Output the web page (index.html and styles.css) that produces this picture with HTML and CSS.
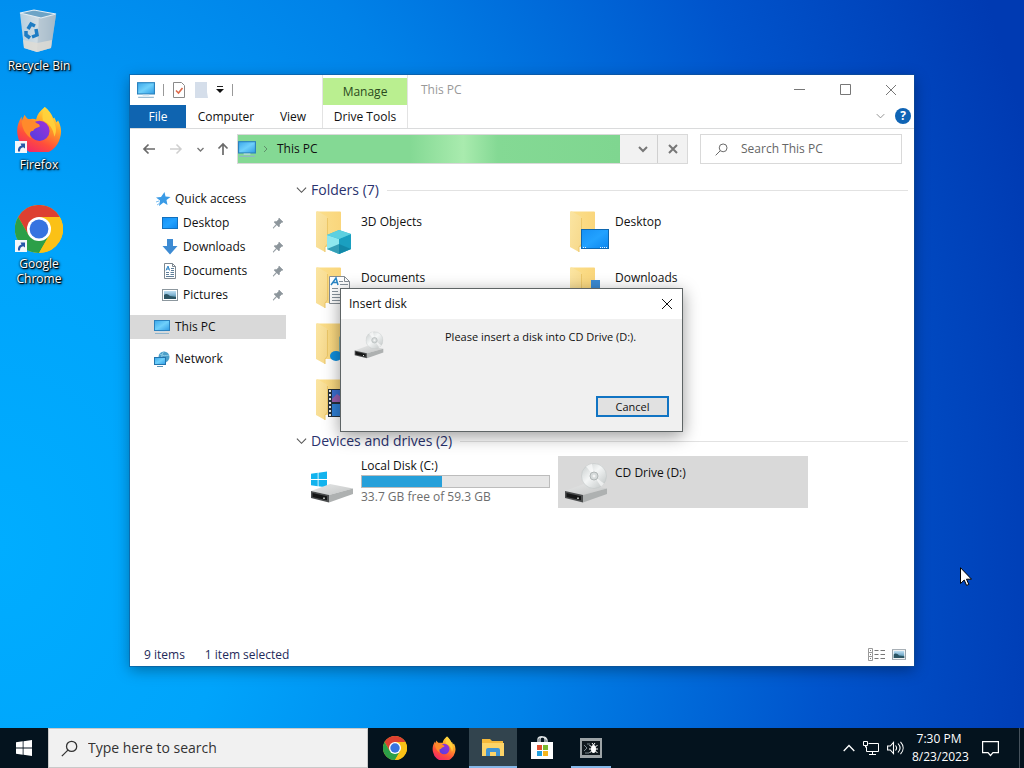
FILE: index.html
```html
<!DOCTYPE html>
<html lang="en">
<head>
    <meta charset="UTF-8">
    <title>This PC</title>
    <link rel="stylesheet" href="styles.css">
</head>
<body>
    <!-- shared icons -->
    <svg class="defs" width="0" height="0" aria-hidden="true">
        <defs>
            <linearGradient id="gScreen" x1="0" y1="0" x2="1" y2="1"><stop offset="0" stop-color="#3ba7ea"/><stop offset="0.5" stop-color="#6fd0fb"/><stop offset="1" stop-color="#2f9be4"/></linearGradient>
            <linearGradient id="gDesk" x1="0" y1="0" x2="1" y2="1"><stop offset="0" stop-color="#1590f5"/><stop offset="0.5" stop-color="#22a2ff"/><stop offset="1" stop-color="#0c86ee"/></linearGradient>
            <linearGradient id="gFolder" x1="0" y1="0" x2="1" y2="0"><stop offset="0" stop-color="#fbdf8c"/><stop offset="1" stop-color="#fad67c"/></linearGradient>
            <linearGradient id="gFront" x1="0" y1="0" x2="1" y2="1"><stop offset="0" stop-color="#fbe5a2"/><stop offset="1" stop-color="#f6d88a"/></linearGradient>
            <linearGradient id="gFox" x1="0.8" y1="0" x2="0.3" y2="1"><stop offset="0" stop-color="#fff04a"/><stop offset="0.35" stop-color="#ffa326"/><stop offset="0.7" stop-color="#ff4f3a"/><stop offset="1" stop-color="#f0246e"/></linearGradient>
            <linearGradient id="gGlobe" x1="0" y1="1" x2="1" y2="0"><stop offset="0" stop-color="#4f3fe0"/><stop offset="1" stop-color="#a030d8"/></linearGradient>
            <linearGradient id="gDisc" x1="0" y1="0" x2="1" y2="1"><stop offset="0" stop-color="#c5caca"/><stop offset="0.45" stop-color="#f4f6f6"/><stop offset="1" stop-color="#bcc1c1"/></linearGradient>
            <linearGradient id="gDrive" x1="0" y1="0" x2="1" y2="1"><stop offset="0" stop-color="#e6e7e7"/><stop offset="1" stop-color="#c4c6c6"/></linearGradient>
            <linearGradient id="gBin" x1="0" y1="0" x2="1" y2="0"><stop offset="0" stop-color="#b4cfe0"/><stop offset="0.5" stop-color="#d3dde3"/><stop offset="1" stop-color="#9fb6c4"/></linearGradient>
            <linearGradient id="gPic" x1="0" y1="0" x2="0" y2="1"><stop offset="0" stop-color="#bfe0f3"/><stop offset="0.5" stop-color="#7fb2d0"/><stop offset="1" stop-color="#2d6b78"/></linearGradient>

            <symbol id="pc" viewBox="0 0 16 16">
                <rect x="0.5" y="1.5" width="15" height="10" fill="url(#gScreen)" stroke="#2b82be"/>
                <path d="M1 14.5h14" stroke="#8fb4cc"/>
                <path d="M5 12.5h6" stroke="#c5dbe8"/>
            </symbol>
            <symbol id="folder" viewBox="0 0 48 48">
                <path d="M9 4.500h23a1 1 0 0 1 1 1V40H14V9z" fill="url(#gFolder)"/>
                <path d="M8 5c0-1 1-1 2-.5l8 4.500c1 .5 1.500 1 1.500 2V37l-2.500 3v5L8 40z" fill="url(#gFront)"/>
                <path d="M17 45v-5l2.500-3V11" fill="none" stroke="#ecc768"/>
            </symbol>
            <symbol id="doc" viewBox="0 0 16 16">
                <path d="M2.500.5h8l3 3v12h-11z" fill="#fff" stroke="#7d8790"/>
                <path d="M10.500.5v3h3" fill="none" stroke="#7d8790"/>
                <path d="M4 7.500l2-4.500 1.500 4.500M4.500 6h3" fill="none" stroke="#2f86c8"/>
                <path d="M9 5.500h3M9 7.500h3M4 9.500h3M8.500 9.500h3.500M4 11.500h3M8.500 11.500h3.500M4 13.500h8" stroke="#5f7f9a"/>
            </symbol>
            <symbol id="picture" viewBox="0 0 16 12">
                <rect x="0.5" y="0.5" width="15" height="11" fill="#fff" stroke="#8c979e"/>
                <rect x="2" y="2" width="12" height="8" fill="url(#gPic)"/>
                <path d="M2 6c2-2 4-1 6 1l6 1v2H2z" fill="#2c5564"/>
            </symbol>
            <symbol id="pin" viewBox="0 0 12 12">
                <path d="M7 1l4 4-1.500.5L7.500 7.500c.2 1 0 2-.5 2.500L4.800 7.800 1.300 11.200 1 11l3.200-3.700L2 5c.8-.7 1.700-.7 2.600-.4l2-2z" fill="#8d969c" stroke="#8d969c" stroke-width=".6"/>
            </symbol>
            <symbol id="chevron" viewBox="0 0 12 8">
                <path d="M1 1.500l5 5 5-5" fill="none" stroke="currentColor" stroke-width="1.200"/>
            </symbol>
            <symbol id="lens" viewBox="0 0 16 16">
                <circle cx="10" cy="6" r="4.800" fill="none" stroke="currentColor" stroke-width="1.200"/>
                <path d="M6.500 9.500L.8 15.200" stroke="currentColor" stroke-width="1.200"/>
            </symbol>
            <symbol id="close" viewBox="0 0 12 12">
                <path d="M1 1l10 10M11 1L1 11" stroke="currentColor"/>
            </symbol>
            <symbol id="winlogo" viewBox="0 0 16 16">
                <path d="M0 2.300l6.700-1v6.300H0zM7.500 1.200L16 0v7.600H7.500zM0 8.400h6.700v6.300L0 13.700zM7.500 8.400H16V16l-8.500-1.200z" fill="currentColor"/>
            </symbol>
            <symbol id="drive" viewBox="0 0 44 20">
                <path d="M1 8L20 1l23 4.500L19 12z" fill="url(#gDrive)"/>
                <path d="M1 8l18 4v7.500L1 15z" fill="#4b4d4e"/>
                <path d="M2.500 10l14.500 3.300v4L2.500 14z" fill="#151616"/>
                <path d="M19 12L43 5.500V11L19 19.500z" fill="#aeb1b1"/>
                <path d="M14 14.500v1.500" stroke="#dfe5df" stroke-width="1.500"/>
            </symbol>
            <symbol id="disc" viewBox="0 0 26 26">
                <circle cx="13" cy="13" r="12.500" fill="url(#gDisc)" stroke="#c3c8c8" stroke-width=".6"/>
                <path d="M13 13L5 3.500A12.500 12.500 0 0 1 11 .7zM13 13l10 7.500a12.500 12.500 0 0 1-3 3z" fill="#fff" opacity="0.6"/>
                <circle cx="13" cy="13" r="4" fill="#d5dada" stroke="#b1b6b6"/>
                <circle cx="13" cy="13" r="1.500" fill="#f4f4f4"/>
            </symbol>
            <symbol id="cd" viewBox="0 0 44 40">
                <use href="#drive" x="0" y="20" width="44" height="20"/>
                <use href="#disc" x="17" y="0" width="26" height="26"/>
            </symbol>
            <symbol id="chrome" viewBox="0 0 48 48">
                <circle cx="24" cy="24" r="24" fill="#fbc116"/>
                <path d="M3.200 12A24 24 0 0 1 44.800 12H24L13.600 30z" fill="#dd4031"/>
                <path d="M3.200 12A24 24 0 0 0 24 48L34.400 30 24 24 13.600 30z" fill="#2c9f48"/>
                <path d="M24 12h20.800A24 24 0 0 1 24 48l10.400-18z" fill="#fbc116"/>
                <circle cx="24" cy="24" r="12" fill="#fff"/>
                <circle cx="24" cy="24" r="9.400" fill="#3673e0"/>
            </symbol>
            <symbol id="firefox" viewBox="0 0 48 48">
                <path d="M30 1c4 3 7 7 9 12l1-1c1 2 2 4 2 5l2-2c3 6 4 12 2 18A22.500 22.500 0 0 1 2 32C0 24 2 17 6 11v4l3-6c1 2 2 3 4 5 3-1 6-1 8 0 1-5 4-9 9-13z" fill="url(#gFox)"/>
                <circle cx="24.500" cy="26" r="10.500" fill="url(#gGlobe)"/>
                <path d="M6 16c3-3 8-3 12-1 2 1 3 3 6 4l1 2c-3 2-6 2-7 5-1 0-2 0-3 1-1 3 0 5 1 7-5-3-10-10-10-18z" fill="#ff8a2b"/>
                <path d="M28 15c-1-5 0-10 2-14 4 4 6 8 8 12 4 7 5 13 2 19-1-8-5-14-12-17z" fill="#ffd33c" opacity="0.9"/>
            </symbol>
            <symbol id="shortcut" viewBox="0 0 12 12">
                <rect width="12" height="12" fill="#f5f7fa"/>
                <path d="M3 10.500C2.500 7 4 5 6.500 4.500L5.500 2.500H10V7.500L8.300 6.300C6 6.500 5 8 5 10.500z" fill="#2757a8"/>
            </symbol>
        </defs>
    </svg>

    <main class="desktop">
        <nav class="shortcuts" aria-label="Desktop">
            <a href="#" class="shortcut">
                <svg width="48" height="48" viewBox="0 0 48 48">
                    <path d="M5 6l36 2-5 33-14 4-13-4z" fill="url(#gBin)"/>
                    <path d="M24 9l17-1-5 33-14 4z" fill="#a9bccb" opacity="0.6"/>
                    <path d="M5 6l14-3 22 4-15 4z" fill="#6ea4c6" stroke="#e6eef3" stroke-width="1.200"/>
                    <path d="M8 33l14 3 15-3-1 8-14 4-13-4z" fill="#e0dcd5" opacity="0.8"/>
                    <g fill="none" stroke="#1d7cc4" stroke-width="3.500">
                        <path d="M13 22l3-5 4 2"/><path d="M21 22l1 6-5 2"/><path d="M15 31l-4-3 0-4"/>
                    </g>
                </svg>
                <span>Recycle Bin</span>
            </a>
            <a href="#" class="shortcut">
                <svg width="48" height="48" viewBox="0 0 48 48">
                    <use href="#firefox" x="1" y="0" width="46" height="46"/>
                    <use href="#shortcut" x="0" y="35" width="12" height="12"/>
                </svg>
                <span>Firefox</span>
            </a>
            <a href="#" class="shortcut">
                <svg width="48" height="48" viewBox="0 0 48 48">
                    <use href="#chrome" width="48" height="48"/>
                    <use href="#shortcut" x="0" y="35" width="12" height="12"/>
                </svg>
                <span>Google Chrome</span>
            </a>
        </nav>

        <section class="window">
            <header class="ribbon">
                <div class="ribbon-left">
                    <div class="quick-bar">
                        <svg width="18" height="18"><use href="#pc"/></svg>
                        <i class="sep"></i>
                        <button aria-label="Properties">
                            <svg width="14" height="16" viewBox="0 0 14 16"><path d="M1.500.5h8l3 3v12h-11z" fill="#fff" stroke="#8a8a8a"/><path d="M4 8.500l2.500 2.500 4-5" fill="none" stroke="#dd6a4a" stroke-width="1.600"/></svg>
                        </button>
                        <button aria-label="New folder">
                            <svg width="14" height="16" viewBox="0 0 14 16"><path d="M1 0h12v10l1 6H1z" fill="#d5deea"/></svg>
                        </button>
                        <button aria-label="Customize">
                            <svg width="8" height="8" viewBox="0 0 8 8"><path d="M1 .5h6" stroke="#222"/><path d="M0 3h8L4 7z" fill="#111"/></svg>
                        </button>
                        <i class="sep"></i>
                    </div>
                    <div class="tabs">
                        <button class="tab file">File</button>
                        <button class="tab computer">Computer</button>
                        <button class="tab view">View</button>
                    </div>
                </div>
                <div class="context">
                    <div class="context-title">Manage</div>
                    <button class="tab">Drive Tools</button>
                </div>
                <div class="ribbon-right">
                    <div class="title-row">
                        <h1>This PC</h1>
                        <button aria-label="Minimize"><svg width="11" height="11" viewBox="0 0 11 11"><path d="M0 5.500h11" stroke="currentColor"/></svg></button>
                        <button aria-label="Maximize"><svg width="11" height="11" viewBox="0 0 11 11"><path d="M.5.5h10v10H.5z" fill="none" stroke="currentColor"/></svg></button>
                        <button aria-label="Close"><svg width="12" height="12"><use href="#close"/></svg></button>
                    </div>
                    <div class="help-row">
                        <button aria-label="Expand ribbon"><svg width="9" height="6"><use href="#chevron"/></svg></button>
                        <button class="help" aria-label="Help">?</button>
                    </div>
                </div>
            </header>

            <div class="address-row">
                <div class="nav-buttons">
                    <button aria-label="Back"><svg width="14" height="12" viewBox="0 0 14 12"><path d="M13 6H2M6.500 1.500L2 6l4.500 4.500" fill="none" stroke="#6a6a6a" stroke-width="1.700"/></svg></button>
                    <button aria-label="Forward"><svg width="14" height="12" viewBox="0 0 14 12"><path d="M1 6h11M7.500 1.500L12 6l-4.500 4.500" fill="none" stroke="#cfcfcf" stroke-width="1.500"/></svg></button>
                    <button aria-label="Recent"><svg width="7" height="5" viewBox="0 0 7 5"><path d="M.5 1l3 3 3-3" fill="none" stroke="#777" stroke-width="1.400"/></svg></button>
                    <button aria-label="Up"><svg width="12" height="14" viewBox="0 0 12 14"><path d="M6 13V2M1.500 6.500L6 2l4.500 4.500" fill="none" stroke="#6a6a6a" stroke-width="1.700"/></svg></button>
                </div>
                <div class="address">
                    <div class="crumbs">
                        <svg width="18" height="18"><use href="#pc"/></svg>
                        <svg width="5" height="8" viewBox="0 0 5 8"><path d="M1 1l3 3-3 3" fill="none" stroke="#5f8f6a"/></svg>
                        <a href="#">This PC</a>
                    </div>
                    <button class="previous" aria-label="Previous locations"><svg width="10" height="7" viewBox="0 0 10 7"><path d="M1 1l4 4 4-4" fill="none" stroke="#777" stroke-width="2"/></svg></button>
                    <button class="stop" aria-label="Stop"><svg width="10" height="10" viewBox="0 0 10 10"><path d="M1 1l8 8M9 1L1 9" stroke="#777" stroke-width="2"/></svg></button>
                </div>
                <label class="search">
                    <svg width="13" height="13"><use href="#lens"/></svg>
                    <input type="text" placeholder="Search This PC" aria-label="Search This PC">
                </label>
            </div>

            <div class="content">
                <nav class="tree" aria-label="Navigation">
                    <div class="group">
                        <a href="#" class="root quick">
                            <svg width="16" height="16" viewBox="0 0 16 16"><path d="M9.500 1l1 4.500L15.500 6 11.500 9l1 5-4-2.500L4 15l1-5.500L1 6.500 6 6z" fill="#3a9be6"/><path d="M1 11l3-1M2 14l3-2" stroke="#7abff2"/></svg>
                            <span>Quick access</span>
                        </a>
                        <a href="#">
                            <svg width="16" height="16" viewBox="0 0 16 16"><rect x="0.500" y="2.500" width="15" height="11" fill="url(#gDesk)" stroke="#1270bd"/></svg>
                            <span>Desktop</span>
                            <svg class="pin" width="12" height="12"><use href="#pin"/></svg>
                        </a>
                        <a href="#">
                            <svg width="16" height="16" viewBox="0 0 16 16"><path d="M5 0h6v7h4.500L8 15.500.5 7H5z" fill="#3d8bd3"/></svg>
                            <span>Downloads</span>
                            <svg class="pin" width="12" height="12"><use href="#pin"/></svg>
                        </a>
                        <a href="#">
                            <svg width="16" height="16"><use href="#doc"/></svg>
                            <span>Documents</span>
                            <svg class="pin" width="12" height="12"><use href="#pin"/></svg>
                        </a>
                        <a href="#">
                            <svg width="16" height="12"><use href="#picture"/></svg>
                            <span>Pictures</span>
                            <svg class="pin" width="12" height="12"><use href="#pin"/></svg>
                        </a>
                    </div>
                    <a href="#" class="root selected">
                        <svg width="16" height="16"><use href="#pc"/></svg>
                        <span>This PC</span>
                    </a>
                    <a href="#" class="root">
                        <svg width="16" height="16" viewBox="0 0 16 16"><circle cx="10" cy="6" r="5.500" fill="#4b9fc9"/><path d="M6 3c3 2 6 2 9 1M10 .5c-3 3-3 8 0 11" fill="none" stroke="#8fcce6"/><rect x="0.500" y="6.500" width="11" height="7" fill="url(#gScreen)" stroke="#2374ad"/><path d="M3 15.500h6" stroke="#5a93b5"/></svg>
                        <span>Network</span>
                    </a>
                </nav>

                <div class="files">
                    <h2><svg width="11" height="8"><use href="#chevron"/></svg>Folders (7)</h2>
                    <div class="items">
                        <a href="#" class="item">
                            <svg width="48" height="48" viewBox="0 0 48 48"><use href="#folder"/><path d="M19 28l12-5 12 4v15l-12 5-12-5z" fill="#35bfd6"/><path d="M19 28l12 4v15l-12-5z" fill="#8fe7ee"/><path d="M31 32l12-5v15l-12 5z" fill="#1a9fc0"/><path d="M19 28l12-5 12 4-12 5z" fill="#5dd0e0"/><path d="M19 42l12-5 12 5-12 5z" fill="#0f7f9e" opacity="0.7"/></svg>
                            <span>3D Objects</span>
                        </a>
                        <a href="#" class="item">
                            <svg width="48" height="48" viewBox="0 0 48 48"><use href="#folder"/><rect x="19.500" y="22.500" width="27" height="19" fill="url(#gDesk)" stroke="#0e67b0"/><path d="M21 40.500h4M38 40.500h7" stroke="#e8f4ff" stroke-dasharray="1 1"/></svg>
                            <span>Desktop</span>
                        </a>
                        <a href="#" class="item">
                            <svg width="48" height="48" viewBox="0 0 48 48"><use href="#folder"/><path d="M21.500 13.500h15l5 5v22h-20z" fill="#fff" stroke="#858d94"/><path d="M36.500 13.500v5h5" fill="none" stroke="#858d94"/><path d="M23 22l5-7 2 7M25 19.500h4" fill="none" stroke="#2b86c5" stroke-width="1.500"/><path d="M31 18.500h4M32 21.500h8M24 25.500h6M32 25.500h8M24 28.500h6M32 28.500h8M24 31.500h16M24 34.500h16M24 37.500h16" stroke="#87929b"/></svg>
                            <span>Documents</span>
                        </a>
                        <a href="#" class="item">
                            <svg width="48" height="48" viewBox="0 0 48 48"><use href="#folder"/><path d="M29 17h9v12h7L33.500 43 22 29h7z" fill="#3d8bd3"/></svg>
                            <span>Downloads</span>
                        </a>
                        <a href="#" class="item" aria-label="Music">
                            <svg width="48" height="48" viewBox="0 0 48 48"><use href="#folder"/><ellipse cx="28" cy="37" rx="6" ry="5" fill="#0f8fdd"/><path d="M33 37V20l9 5" fill="none" stroke="#0f8fdd" stroke-width="3"/></svg>
                        </a>
                        <a href="#" class="item" aria-label="Pictures">
                            <svg width="48" height="48" viewBox="0 0 48 48"><use href="#folder"/><use href="#picture" x="18" y="22" width="28" height="21"/></svg>
                        </a>
                        <a href="#" class="item" aria-label="Videos">
                            <svg width="48" height="48" viewBox="0 0 48 48"><use href="#folder"/><rect x="20" y="14" width="26" height="28" fill="#26313c"/><path d="M22 15v27" stroke="#e8ecf0" stroke-width="2" stroke-dasharray="2 2"/><rect x="24" y="15" width="18" height="12" fill="#3c6fd0"/><path d="M24 24l5-5 4 3 5 3v2H24z" fill="#9a5fae"/><rect x="24" y="29" width="18" height="12" fill="#2f7fd6"/></svg>
                        </a>
                    </div>

                    <h2><svg width="11" height="8"><use href="#chevron"/></svg>Devices and drives (2)</h2>
                    <div class="items">
                        <a href="#" class="item drive">
                            <svg width="48" height="48" viewBox="0 0 48 48"><g color="#12b3ee"><use href="#winlogo" x="3" y="13" width="16" height="17"/></g><use href="#drive" x="2" y="25" width="44" height="20"/></svg>
                            <div class="drive-info">
                                <span>Local Disk (C:)</span>
                                <div class="meter"><div class="used" style="width: 43%"></div></div>
                                <small>33.7 GB free of 59.3 GB</small>
                            </div>
                        </a>
                        <a href="#" class="item active">
                            <svg width="48" height="48" viewBox="0 0 48 48"><use href="#cd" x="2" y="5" width="44" height="40"/></svg>
                            <span>CD Drive (D:)</span>
                        </a>
                    </div>
                </div>
            </div>

            <footer class="status">
                <span>9 items</span>
                <span>1 item selected</span>
                <div class="views">
                    <button aria-label="Details"><svg width="17" height="13" viewBox="0 0 17 13"><path d="M.5.5h4v4h-4zM.5 4.500h4v4h-4zM.5 8.500h4v4h-4z" fill="none" stroke="#999"/><path d="M2 2.500h1M2 6.500h1M2 10.500h1M6.500 2.500h4M12.500 2.500H17M6.500 6.500h4M12.500 6.500H17M6.500 10.500h4M12.500 10.500H17" stroke="#777"/></svg></button>
                    <button aria-label="Large icons"><svg width="14" height="11"><use href="#picture"/></svg></button>
                </div>
            </footer>

            <div class="dialog" role="dialog" aria-labelledby="dialogTitle">
                <div class="dialog-title">
                    <span id="dialogTitle">Insert disk</span>
                    <button aria-label="Close"><svg width="12" height="12"><use href="#close"/></svg></button>
                </div>
                <div class="dialog-body">
                    <svg width="30" height="30"><use href="#cd"/></svg>
                    <p>Please insert a disk into CD Drive (D:).</p>
                </div>
                <div class="dialog-actions">
                    <button class="cancel">Cancel</button>
                </div>
            </div>
        </section>

        <svg class="cursor" width="12" height="19" viewBox="0 0 12 19"><path d="M.5.7v15.800l3.700-3.500 2.400 5.400 2.200-1-2.300-5.200h5z" fill="#fff" stroke="#000"/></svg>
    </main>

    <footer class="taskbar">
        <button class="start" aria-label="Start"><svg width="16" height="16"><use href="#winlogo"/></svg></button>
        <label class="task-search">
            <svg width="17" height="17"><use href="#lens"/></svg>
            <input type="text" placeholder="Type here to search" aria-label="Type here to search">
        </label>
        <div class="apps">
            <button aria-label="Chrome"><svg width="24" height="24"><use href="#chrome"/></svg></button>
            <button aria-label="Firefox"><svg width="24" height="24"><use href="#firefox"/></svg></button>
            <button class="open current" aria-label="File Explorer">
                <svg width="24" height="24" viewBox="0 0 24 24"><path d="M1 3h8l2 2h11v15H1z" fill="#f5b93a"/><path d="M1 7h22v13H1z" fill="#fcd468"/><path d="M5 20v-6a2 2 0 0 1 2-2h10a2 2 0 0 1 2 2v6h-4v-4H9v4z" fill="#3f94d4"/></svg>
            </button>
            <button aria-label="Store">
                <svg width="24" height="24" viewBox="0 0 24 24"><path d="M8 6V3c0-3 7-3 7 0v3M10 6V3c0-3 6-3 7 1v2" fill="none" stroke="#dfe3e5" stroke-width="1.300"/><path d="M1 6h22v17H1z" fill="#fff"/><path d="M7 9h5v5H7z" fill="#e04f2f"/><path d="M13 9h5v5h-5z" fill="#7cb82f"/><path d="M7 15h5v5H7z" fill="#20a0e0"/><path d="M13 15h5v5h-5z" fill="#f5b51d"/></svg>
            </button>
            <button class="open" aria-label="Debugger">
                <svg width="22" height="20" viewBox="0 0 22 20"><rect width="22" height="20" fill="#9da3a6"/><rect x="2" y="3" width="18" height="14" fill="#10181d"/><path d="M4 7l3 3-3 3M7 6h3M5 15h4" stroke="#7b878e" fill="none"/><ellipse cx="13.500" cy="11" rx="2.500" ry="4" fill="#fff"/><path d="M9.500 7l2 2M9 11h9M9.500 15l2-2M17.500 7l-2 2M17.500 15l-2-2M12 5l1.500 2L15 5" stroke="#fff" fill="none"/></svg>
            </button>
        </div>
        <div class="tray">
            <button aria-label="Show hidden icons"><svg width="12" height="8" viewBox="0 0 12 8"><path d="M.7 7L6 1.500 11.300 7" fill="none" stroke="#fff" stroke-width="1.300"/></svg></button>
            <button aria-label="Network"><svg width="16" height="15" viewBox="0 0 16 15"><path d="M5.500 2.500h10v8h-12v-5M9.500 10.500v3M6 13.500h7" fill="none" stroke="#fff"/><path d="M.5.5h4v4h-4zM2.500 4.500v2" fill="none" stroke="#fff"/></svg></button>
            <button aria-label="Volume"><svg width="17" height="14" viewBox="0 0 17 14"><path d="M.6 5h2.700l3.200-3.500v11L3.300 9H.6zM8.500 4.500c1.300 1.500 1.300 3.500 0 5M11 2.500c2.500 2.700 2.500 6.300 0 9M13.500.8c3.500 3.800 3.500 8.600 0 12.400" fill="none" stroke="#fff" stroke-width="1.100"/></svg></button>
            <div class="clock"><time>7:30 PM</time><time>8/23/2023</time></div>
            <button class="notify" aria-label="Notifications"><svg width="17" height="17" viewBox="0 0 17 17"><path d="M.6 1.600h15.800v11H11L8.500 15.500 6 12.600H.6z" fill="none" stroke="#fff" stroke-width="1.200"/></svg></button>
        </div>
    </footer>
</body>
</html>
```
FILE: styles.css
```css
* { box-sizing: border-box; }
body { margin: 0; height: 100vh; display: flex; flex-direction: column; overflow: hidden; font-family: "Open Sans", "Noto Sans", sans-serif; font-size: 12px; line-height: 16px; color: #111; }
a { color: inherit; text-decoration: none; }
button { display: flex; align-items: center; justify-content: center; padding: 0; border: none; background: none; font: inherit; color: inherit; }
input { min-width: 0; border: none; outline: none; padding: 0; background: none; font: inherit; color: inherit; }
input::placeholder { color: inherit; opacity: 1; }
svg { flex: none; display: block; }
.defs { position: absolute; }

/* desktop */
.desktop { flex: 1; position: relative; min-height: 0; background: radial-gradient(ellipse 105% 190% at 0% 75%, #00adff 0%, #00a4fb 22%, #0082e8 50%, #0054cc 77%, #003ab2 100%); }
.shortcuts { display: flex; flex-direction: column; gap: 20px; width: 78px; padding-top: 7px; }
.shortcut { display: flex; flex-direction: column; align-items: center; gap: 3px; min-height: 79px; color: #fff; text-align: center; line-height: 15px; text-shadow: 0 0 2px #000, 1px 1px 1px #000, 1px 1px 3px #000; }
.shortcut span { max-width: 64px; }
.cursor { position: absolute; left: 960px; top: 567px; }

/* explorer window */
.window { position: absolute; left: 130px; top: 75px; right: 110px; bottom: 62px; display: flex; flex-direction: column; background: #fff; box-shadow: 0 0 0 1px rgba(20, 80, 140, 0.5), 0 4px 14px rgba(0, 0, 0, 0.35); }
.ribbon { display: flex; height: 54px; border-bottom: 1px solid #dadbdc; }
.ribbon-left { width: 192px; }
.quick-bar { display: flex; align-items: center; gap: 8px; height: 30px; padding-left: 7px; }
.sep { width: 1px; height: 12px; background: #999; }
.tabs { display: flex; height: 23px; }
.tab { height: 23px; }
.file { width: 56px; background: #0f64b0; color: #fff; }
.computer { width: 80px; }
.view { width: 54px; }
.context { width: 86px; padding-top: 3px; border: solid #e3e3e3; border-width: 0 1px; }
.context-title { height: 27px; background: #baef90; text-align: center; line-height: 28px; color: #2a4a1c; }
.context .tab { width: 100%; }
.ribbon-right { flex: 1; }
.title-row { display: flex; height: 29px; color: #777; }
.title-row h1 { flex: 1; margin: 0; padding-left: 13px; font-size: 12px; font-weight: normal; line-height: 29px; color: #999; }
.title-row button { width: 46px; }
.help-row { display: flex; justify-content: flex-end; align-items: center; gap: 10px; height: 24px; padding-right: 3px; color: #888; }
.help { width: 16px; height: 16px; border-radius: 50%; background: #0f64b5; color: #fff; font-weight: bold; }

.address-row { display: flex; gap: 12px; height: 40px; padding: 5px 12px 5px 12px; }
.nav-buttons { display: flex; align-items: center; justify-content: space-between; width: 87px; }
.address { flex: 1; display: flex; margin-left: -4px; border: 1px solid #d9d9d9; background: #f2f2f2; }
.crumbs { flex: 1; display: flex; align-items: center; gap: 7px; background: linear-gradient(90deg, #84d994 0%, #84d994 45%, #a9ebae 59%, #84d994 68%, #7fd690 100%); }
.crumbs a { padding-left: 2px; }
.previous { width: 37px; padding-left: 8px; }
.stop { width: 30px; border-left: 1px solid #d0d0d0; }
.search { display: flex; align-items: center; gap: 13px; width: 202px; padding-left: 14px; border: 1px solid #d9d9d9; color: #666; }

.content { flex: 1; display: flex; min-height: 0; }
.tree { display: flex; flex-direction: column; gap: 8px; width: 156px; padding-top: 18px; }
.tree a { display: flex; align-items: center; gap: 5px; height: 24px; padding: 0 2px 0 32px; }
.tree .root { padding-left: 24px; }
.tree .quick { padding-left: 25px; gap: 4px; }
.tree .selected { background: #d9d9d9; }
.tree .pin { margin-left: auto; }
.files { flex: 1; padding: 6px 6px 0 10px; }
.files h2 { display: flex; align-items: center; gap: 4px; height: 30px; margin: 0; font-size: 14px; font-weight: normal; color: #2a326e; }
.files h2 svg { color: #555; }
.files h2::after { content: ""; flex: 1; height: 1px; margin-left: 4px; background: #e2e2e2; }
.items { display: grid; grid-template-columns: repeat(2, 250px); gap: 4px; padding: 0 0 1px 8px; }
.item { display: flex; gap: 5px; height: 52px; padding: 2px 4px; }
.item > span { padding-top: 7px; }
.active { background: #d9d9d9; }
.drive-info { flex: 1; }
.drive-info span, .drive-info small { display: block; }
.drive-info small { padding-top: 1px; font-size: 12px; color: #6d6d6d; }
.meter { height: 13px; margin-top: 1px; border: 1px solid #bcbcbc; background: #e6e6e6; }
.used { height: 100%; background: #26a0da; }
.status { display: flex; align-items: center; gap: 20px; height: 23px; padding: 0 8px 0 14px; color: #1e2a5a; }
.views { display: flex; gap: 7px; margin-left: auto; }

/* dialog */
.dialog { position: absolute; left: 210px; top: 213px; width: 343px; border: 1px solid #5e6465; background: #f0f0f0; box-shadow: 0 4px 16px rgba(0, 0, 0, 0.4); }
.dialog-title { display: flex; justify-content: space-between; align-items: center; height: 30px; padding: 0 9px 0 8px; background: #fff; }
.dialog-body { display: flex; height: 77px; padding: 11px 13px; font-size: 11px; }
.dialog-body p { margin: 0; padding-left: 61px; line-height: 14px; }
.dialog-actions { display: flex; justify-content: flex-end; padding: 0 13px 14px; }
.cancel { width: 73px; height: 21px; border: 2px solid #1174c3; background: #e1e1e1; font-size: 11px; }

/* taskbar */
.taskbar { display: flex; height: 40px; background: #04131e; color: #fff; }
.start { width: 48px; }
.task-search { display: flex; align-items: center; gap: 10px; width: 320px; padding-left: 12px; border: 1px solid #c9c9c9; background: #f1f1f1; color: #333; font-size: 14px; line-height: 20px; }
.task-search input { height: 20px; }
.apps { display: flex; gap: 1px; margin-left: 3px; }
.apps button { position: relative; width: 48px; }
.current { background: #32444e; }
.open::after { content: ""; position: absolute; left: 4px; right: 4px; bottom: 0; height: 2px; background: #85b7e8; }
.current::after { left: 0; right: 0; }
.tray { display: flex; align-items: center; gap: 8px; margin-left: auto; margin-right: 4px; padding-right: 20px; border-right: 1px solid #46525c; }
.clock { display: flex; flex-direction: column; width: 54px; text-align: center; line-height: 18px; }
.notify { margin-left: 8px; }
```
